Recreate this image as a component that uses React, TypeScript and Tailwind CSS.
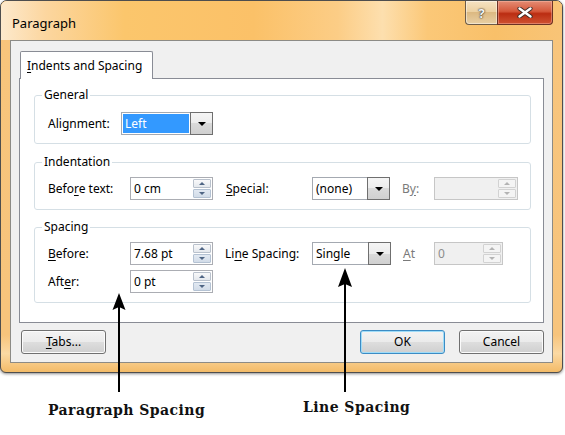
import React from "react";

function U({ children }: { children: React.ReactNode }) {
  return <span className="underline decoration-1 underline-offset-[2px]">{children}</span>;
}

function SpinArrow({ up, color }: { up?: boolean; color: string }) {
  return (
    <svg width="6" height="3" viewBox="0 0 6 3">
      <path d={up ? "M0 3 L3 0 L6 3Z" : "M0 0 L3 3 L6 0Z"} fill={color} />
    </svg>
  );
}

function Spinner({ value, disabled, w }: { value: string; disabled?: boolean; w: string }) {
  return (
    <div
      className={`flex h-[23px] border ${w} ${
        disabled ? "border-[#c6c6c6] bg-[#f0f0f0] text-[#8d8d8d]" : "border-[#abadb3] bg-white text-black"
      }`}
    >
      <div className="flex flex-1 items-center pl-[3px]">{value}</div>
      <div className="flex w-[19px] flex-col gap-px py-px pr-px">
        <div
          className={`flex flex-1 items-center justify-center rounded-[1px] border ${
            disabled ? "border-[#d2d2d2] bg-[#f4f4f4]" : "border-[#b9c1cc] bg-[linear-gradient(#f9f9fa,#e4e8ed)]"
          }`}
        >
          <SpinArrow up color={disabled ? "#b3b3b3" : "#4f6584"} />
        </div>
        <div
          className={`flex flex-1 items-center justify-center rounded-[1px] border ${
            disabled ? "border-[#d2d2d2] bg-[#f4f4f4]" : "border-[#b4c2d3] bg-[linear-gradient(#e2e9f2,#d2dce8)]"
          }`}
        >
          <SpinArrow color={disabled ? "#b3b3b3" : "#4f6584"} />
        </div>
      </div>
    </div>
  );
}

function Dropdown({ value, selected, w }: { value: string; selected?: boolean; w: string }) {
  return (
    <div className={`flex h-[23px] border border-[#a4a9b1] bg-white ${w}`}>
      <div className="flex-1 p-px">
        <div className={`flex h-full items-center pl-[2px] ${selected ? "bg-[#3399ff] text-white" : "text-black"}`}>
          {value}
        </div>
      </div>
      <div className="-my-px -mr-px flex w-[23px] items-center justify-center border border-[#6f6f6f] bg-[linear-gradient(#f5f5f5_0%,#ececec_50%,#dadada_50%,#d0d0d0_100%)]">
        <svg width="8" height="4" viewBox="0 0 8 4">
          <path d="M0 0H8L4 4Z" fill="#000" />
        </svg>
      </div>
    </div>
  );
}

function Btn({ children, def }: { children: React.ReactNode; def?: boolean }) {
  return (
    <div
      className={`flex h-[24px] w-[85px] items-center justify-center rounded-[3px] border bg-[linear-gradient(#f3f3f3_0%,#ebebeb_48%,#dddddd_52%,#cfcfcf_100%)] text-[12px] leading-[16px] text-black ${
        def
          ? "border-[#3c8cc4] shadow-[inset_0_0_0_1px_#9fdcf8]"
          : "border-[#707070] shadow-[inset_0_0_0_1px_#fbfbfb]"
      }`}
    >
      {children}
    </div>
  );
}

export default function App() {
  return (
    <div className="relative h-[435px] w-[565px] overflow-hidden bg-white font-['Noto_Sans',sans-serif] text-[12px] leading-[16px] text-black">
      {/* Window */}
      <div className="flex h-[373px] w-[563px] flex-col overflow-hidden rounded-t-[7px] rounded-b-[6px] border border-[#4e4e4e] bg-[#f7c47c] bg-[image:linear-gradient(to_bottom,#f8c57c_0%,#f7c47c_90%,#fbd9a3_95%,#f3bb68_100%)] shadow-[0_1px_3px_rgba(0,0,0,0.45)]">
        {/* Title bar */}
        <div className="flex h-[39px] shrink-0 items-start justify-between bg-[#fbc66e] bg-[image:linear-gradient(to_right,#fde9cc_0%,#fcd69f_8%,#fbc66c_22%,#fbc168_45%,#fccd86_60%,#fddfae_68%,#fbc878_76%,#f9c069_88%,#f8c477_100%)]">
          <div className="pl-[11px] pt-[13px] text-[13px] leading-[18px] text-black">Paragraph</div>
          <div className="mr-[9px] flex h-[24px]">
            <div className="flex w-[32px] items-center justify-center rounded-bl-[4px] border border-t-0 border-r-0 border-[#6d5c49] bg-[#e3c690] bg-[image:linear-gradient(to_bottom,#f6e2c2,#ebcf9f_50%,#dcb982_50%,#e8cfa4)] shadow-[inset_0_0_0_1px_rgba(255,255,255,0.45)]">
              <span className="text-[13px] font-bold leading-[14px] text-[#f5f5f5] [text-shadow:0_0_1px_#2a2a2a,0_0_2px_#2a2a2a]">?</span>
            </div>
            <div className="flex w-[56px] items-center justify-center rounded-br-[4px] border border-t-0 border-[#6b3225] bg-[#c94225] bg-[image:linear-gradient(to_bottom,#e48c74,#d5583b_45%,#bb2d12_55%,#cf5232)] shadow-[inset_0_0_0_1px_rgba(255,200,185,0.4)]">
              <svg width="16" height="11" viewBox="0 0 16 11">
                <path d="M2.5 1.5 L13.5 9.5 M13.5 1.5 L2.5 9.5" stroke="#3b2a25" strokeWidth="4.2" strokeLinecap="round" />
                <path d="M2.5 1.5 L13.5 9.5 M13.5 1.5 L2.5 9.5" stroke="#ffffff" strokeWidth="2.4" strokeLinecap="round" />
              </svg>
            </div>
          </div>
        </div>

        {/* Client area */}
        <div className="mx-[9px] mb-[9px] flex flex-1 flex-col border border-[#8c8b86] bg-[#f0f0f0] px-[8px] pt-[10px]">
          {/* Tab */}
          <div className="relative z-10 ml-px flex h-[28px] w-[133px] items-center rounded-t-[2px] border border-b-0 border-[#898c95] bg-white pl-[6px]">
            <span>
              <U>I</U>ndents and Spacing
            </span>
          </div>
          {/* Tab panel */}
          <div className="-mt-px flex h-[245px] flex-col border border-[#898c95] bg-white pl-[14px] pr-[12px] pt-[8px]">
            {/* General */}
            <fieldset className="rounded-[3px] border border-[#d5dfe5] pb-[8px]">
              <legend className="ml-[7px] px-[2px] leading-[16px]">General</legend>
              <div className="mt-[9px] flex h-[23px] items-center pl-[13px]">
                <div className="w-[73px]">
                  Ali<U>g</U>nment:
                </div>
                <Dropdown value="Left" selected w="w-[92px]" />
              </div>
            </fieldset>

            {/* Indentation */}
            <fieldset className="mt-[10px] rounded-[3px] border border-[#d5dfe5] pb-[9px]">
              <legend className="ml-[7px] px-[2px] leading-[16px]">Indentation</legend>
              <div className="mt-[7px] flex h-[23px] items-center pl-[13px]">
                <div className="w-[82px]">
                  Befo<U>r</U>e text:
                </div>
                <Spinner value="0 cm" w="w-[83px]" />
                <div className="ml-[13px] w-[86px]">
                  <U>S</U>pecial:
                </div>
                <Dropdown value="(none)" w="w-[78px]" />
                <div className="ml-[12px] w-[32px] text-[#7a7a7a]">
                  B<U>y</U>:
                </div>
                <Spinner value="" disabled w="w-[84px]" />
              </div>
            </fieldset>

            {/* Spacing */}
            <fieldset className="mt-[9px] rounded-[3px] border border-[#d5dfe5] pb-[9px]">
              <legend className="ml-[7px] px-[2px] leading-[16px]">Spacing</legend>
              <div className="mt-[7px] flex flex-col gap-[5px] pl-[13px]">
                <div className="flex h-[23px] items-center">
                  <div className="w-[82px]">
                    <U>B</U>efore:
                  </div>
                  <Spinner value="7.68 pt" w="w-[83px]" />
                  <div className="ml-[12px] w-[87px]">
                    Li<U>n</U>e Spacing:
                  </div>
                  <Dropdown value="Single" w="w-[79px]" />
                  <div className="ml-[12px] w-[31px] text-[#7a7a7a]">
                    <U>A</U>t
                  </div>
                  <Spinner value="0" disabled w="w-[69px]" />
                </div>
                <div className="flex h-[23px] items-center">
                  <div className="w-[82px]">
                    Aft<U>e</U>r:
                  </div>
                  <Spinner value="0 pt" w="w-[83px]" />
                </div>
              </div>
            </fieldset>
          </div>

          {/* Buttons */}
          <div className="mt-[7px] flex items-center justify-between pl-[2px]">
            <Btn>
              <span>
                <U>T</U>abs...
              </span>
            </Btn>
            <div className="flex gap-[14px]">
              <Btn def>OK</Btn>
              <Btn>Cancel</Btn>
            </div>
          </div>
        </div>
      </div>

      {/* Annotation labels */}
      <div className="mt-[24px] flex items-start pl-[48px] font-['DejaVu_Serif',serif] text-[14px] font-bold leading-[20px] tracking-[0.45px] text-[#111]">
        <div className="mt-[3px] w-[255px]">Paragraph Spacing</div>
        <div>Line Spacing</div>
      </div>

      {/* Annotation arrows */}
      <svg className="pointer-events-none absolute left-0 top-0" width="565" height="435" viewBox="0 0 565 435">
        <path d="M119 304 V392" stroke="#000" strokeWidth="2" />
        <path d="M119 293 L125.5 310 L119 307 L112.5 310 Z" fill="#000" />
        <path d="M345 282 V392" stroke="#000" strokeWidth="2" />
        <path d="M345 268 L352 287 L345 284 L338 287 Z" fill="#000" />
      </svg>
    </div>
  );
}
